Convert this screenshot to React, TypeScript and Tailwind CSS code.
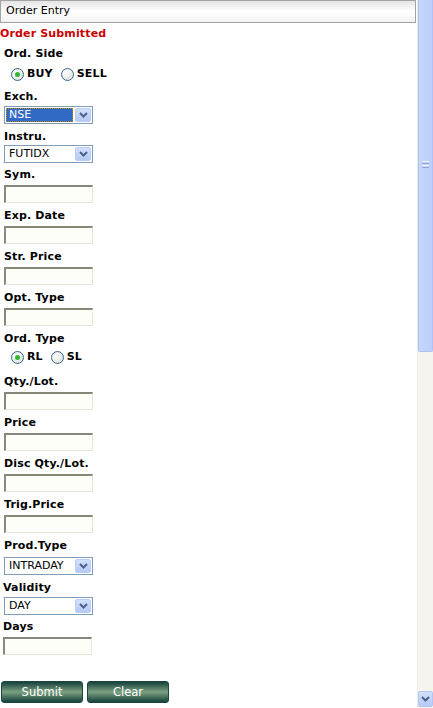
import React from 'react';

const Radio = ({ checked }: { checked?: boolean }) => (
  <span className="w-[13px] h-[13px] rounded-full border border-[#3a6796] bg-[radial-gradient(circle_at_35%_35%,#ffffff,#d8d8d2)] flex items-center justify-center shrink-0">
    {checked && <span className="w-[5px] h-[5px] rounded-full bg-[#2fb82f]" />}
  </span>
);

const Chevron = () => (
  <svg width="9" height="6" viewBox="0 0 9 6">
    <path d="M1 1 L4.5 4.5 L8 1" fill="none" stroke="#4d6185" strokeWidth="2" />
  </svg>
);

const Select = ({ value, focused, className = '' }: { value: string; focused?: boolean; className?: string }) => (
  <div className={`ml-[4px] w-[89px] h-[18px] border border-[#7f9db9] bg-white flex items-center p-[1px] gap-[2px] ${className}`}>
    <div
      className={`flex-1 h-full flex items-center pl-[3px] ${
        focused ? 'bg-[#316ac5] text-white outline outline-1 outline-dotted outline-[#c08a00] -outline-offset-1' : 'text-black'
      }`}
    >
      {value}
    </div>
    <div className="w-[16px] h-full rounded-[2px] border border-[#b9cdf6] bg-linear-to-b from-[#d2e0fd] to-[#b4c9f5] flex items-center justify-center">
      <Chevron />
    </div>
  </div>
);

const TextBox = ({ className = 'ml-[4px]' }: { className?: string }) => (
  <div
    className={`mt-[3px] w-[89px] h-[18px] bg-[#fefef9] border-t-2 border-l-2 border-b border-r border-t-[#878779] border-l-[#8a8a7c] border-b-[#e6e5dc] border-r-[#e6e5dc] ${className}`}
  />
);

const Label = ({ children, className = '' }: { children: React.ReactNode; className?: string }) => (
  <div className={`pl-[4px] h-[14px] leading-[14px] font-bold text-black tracking-[0.15px] ${className}`}>{children}</div>
);

const Btn = ({ children }: { children: React.ReactNode }) => (
  <button
    type="button"
    className="w-[82px] h-[22px] rounded-[3px] border border-[#1b4642] bg-linear-to-b from-[#16423d] via-[#7ba381] to-[#16423d] text-white text-[11.5px] leading-[20px] text-center"
  >
    {children}
  </button>
);

const fields = ['Sym.', 'Exp. Date', 'Str. Price', 'Opt. Type'];
const fields2 = ['Qty./Lot.', 'Price', 'Disc Qty./Lot.', 'Trig.Price'];

export default function App() {
  return (
    <div className="w-[433px] h-[708px] overflow-hidden flex bg-white font-['DejaVu_Sans','Verdana',sans-serif] text-[11px]">
      <div className="w-[417px] flex flex-col">
        <div className="w-[416px] h-[23px] border border-[#a3a3a3] bg-linear-to-b from-[#e4e4e4] via-white to-[#f2f2f2] flex items-center pl-[5px] text-black">
          Order Entry
        </div>

        <div className="mt-[4px] h-[14px] leading-[14px] font-bold text-[#cc0000] tracking-[0.15px]">Order Submitted</div>

        <Label className="mt-[6px]">Ord. Side</Label>
        <div className="mt-[5px] h-[16px] flex items-center pl-[11px] font-bold tracking-[0.15px]">
          <Radio checked />
          <span className="ml-[3px]">BUY</span>
          <span className="ml-[8px]"><Radio /></span>
          <span className="ml-[3px]">SELL</span>
        </div>

        <Label className="mt-[8px]">Exch.</Label>
        <Select value="NSE" focused className="mt-[2px]" />

        <Label className="mt-[6px]">Instru.</Label>
        <Select value="FUTIDX" className="mt-[1px]" />

        {fields.map((f, i) => (
          <div key={f} className={i === 0 ? 'mt-[5px]' : 'mt-[6px]'}>
            <Label>{f}</Label>
            <TextBox />
          </div>
        ))}

        <Label className="mt-[6px]">Ord. Type</Label>
        <div className="mt-[3px] h-[16px] flex items-center pl-[11px] font-bold tracking-[0.15px]">
          <Radio checked />
          <span className="ml-[3px]">RL</span>
          <span className="ml-[8px]"><Radio /></span>
          <span className="ml-[3px]">SL</span>
        </div>

        {fields2.map((f, i) => (
          <div key={f} className={i === 0 ? 'mt-[10px]' : 'mt-[6px]'}>
            <Label>{f}</Label>
            <TextBox />
          </div>
        ))}

        <Label className="mt-[6px]">Prod.Type</Label>
        <Select value="INTRADAY" className="mt-[4px]" />

        <Label className="mt-[6px] !pl-[3px]">Validity</Label>
        <Select value="DAY" className="mt-[2px]" />

        <Label className="mt-[5px] !pl-[3px]">Days</Label>
        <TextBox className="ml-[3px]" />

        <div className="mt-[26px] pl-[1px] flex gap-[4px]">
          <Btn>Submit</Btn>
          <Btn>Clear</Btn>
        </div>
      </div>

      <div className="w-[16px] h-[708px] bg-[#f5f4ee] border-l border-[#ecebe4] flex flex-col">
        <div className="h-[352px] w-[15px] rounded-b-[2px] border border-t-0 border-[#aec3f3] bg-linear-to-r from-[#c6d6fd] to-[#bccff9] flex flex-col items-center pt-[161px]">
          <div className="flex flex-col gap-[1px]">
            <div className="w-[7px] h-[1px] bg-[#eef3ff]" />
            <div className="w-[7px] h-[1px] bg-[#8ca5de]" />
            <div className="w-[7px] h-[1px] bg-[#eef3ff]" />
            <div className="w-[7px] h-[1px] bg-[#8ca5de]" />
          </div>
        </div>
        <div className="flex-1" />
        <div className="mb-[1px] h-[16px] w-[15px] rounded-[2px] border border-[#b2c6f4] bg-linear-to-b from-[#d2e0fd] to-[#b6caf6] flex items-center justify-center">
          <Chevron />
        </div>
      </div>
    </div>
  );
}
